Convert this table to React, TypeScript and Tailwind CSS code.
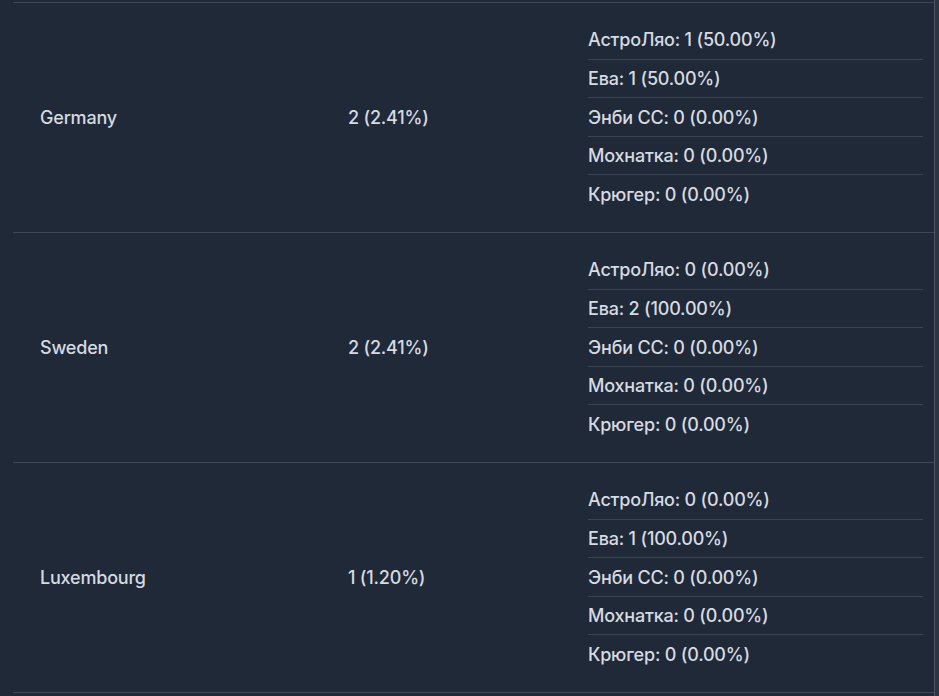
import React from "react"

interface CountryRow {
    country: string
    total: string
    breakdown: string[]
}

const rows: CountryRow[] = [
    {
        country: "Germany",
        total: "2 (2.41%)",
        breakdown: [
            "АстроЛяо: 1 (50.00%)",
            "Ева: 1 (50.00%)",
            "Энби СС: 0 (0.00%)",
            "Мохнатка: 0 (0.00%)",
            "Крюгер: 0 (0.00%)",
        ],
    },
    {
        country: "Sweden",
        total: "2 (2.41%)",
        breakdown: [
            "АстроЛяо: 0 (0.00%)",
            "Ева: 2 (100.00%)",
            "Энби СС: 0 (0.00%)",
            "Мохнатка: 0 (0.00%)",
            "Крюгер: 0 (0.00%)",
        ],
    },
    {
        country: "Luxembourg",
        total: "1 (1.20%)",
        breakdown: [
            "АстроЛяо: 0 (0.00%)",
            "Ева: 1 (100.00%)",
            "Энби СС: 0 (0.00%)",
            "Мохнатка: 0 (0.00%)",
            "Крюгер: 0 (0.00%)",
        ],
    },
]

export default function App() {
    return (
        <div className="flex h-[696px] w-[939px] overflow-hidden bg-[#1f2937] font-['Inter',sans-serif] text-[18px] font-medium tracking-[-0.2px] text-[#d6dae1]">
            <div className="w-[935px] border-r border-[#4b5563] pl-[13px] pt-[2px]">
                <div className="border-b border-[#3d4756]">
                    {rows.map((row) => (
                        <div
                            key={row.country}
                            className="grid h-[230px] grid-cols-[308px_240px_1fr] items-center border-t border-[#3d4756]"
                        >
                            <div className="pl-[27px]">{row.country}</div>
                            <div className="pl-[27px]">{row.total}</div>
                            <div className="pl-[27px] pr-[11px]">
                                {row.breakdown.map((item, i) => (
                                    <div
                                        key={item}
                                        className={`flex h-[38.6px] items-center ${i < row.breakdown.length - 1 ? "border-b border-[#3a4453]" : ""}`}
                                    >
                                        {item}
                                    </div>
                                ))}
                            </div>
                        </div>
                    ))}
                </div>
            </div>
            <div className="flex-1 bg-[#2d3542]" />
        </div>
    )
}
